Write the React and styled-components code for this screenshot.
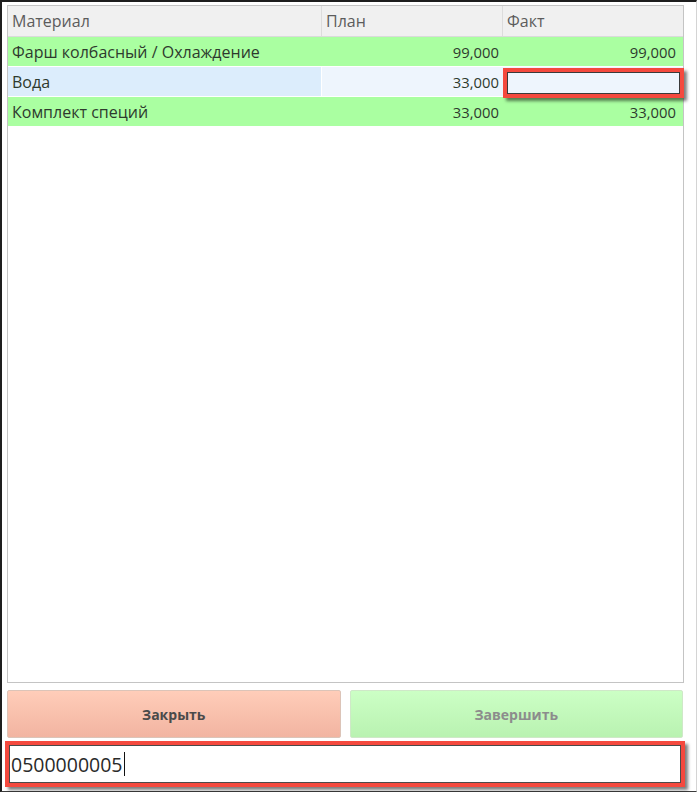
import React from 'react';
import styled, { createGlobalStyle } from 'styled-components';

const Global = createGlobalStyle`
  html, body { margin: 0; padding: 0; background: #fff; }
  body { font-family: "Open Sans", "Noto Sans", sans-serif; }
`;

const Window = styled.div`
  box-sizing: border-box;
  width: 697px;
  height: 792px;
  border-top: 2px solid #1e1e1e;
  border-left: 2px solid #1e1e1e;
  border-right: 1px solid #d4d4d4;
  border-bottom: 1px solid #3c3c3c;
  padding: 3px 12px 0 5px;
  display: flex;
  flex-direction: column;
  background: #fff;
`;

const Table = styled.div`
  box-sizing: border-box;
  height: 678px;
  border: 1px solid #c4c4c4;
  display: flex;
  flex-direction: column;
`;

const COLS = '314px 181px 1fr';

const HeadRow = styled.div`
  display: grid;
  grid-template-columns: ${COLS};
  background: #f0f0f0;
  border-bottom: 1px solid #dadada;
`;

const HeadCell = styled.div`
  height: 30px;
  padding-left: 4px;
  display: flex;
  align-items: center;
  font-size: 16px;
  color: #5c5c5c;
  border-right: ${p => (p.$last ? 'none' : '1px solid #dcdcdc')};
`;

const Row = styled.div`
  display: grid;
  grid-template-columns: ${COLS};
  background: ${p => p.$bg};
  border-bottom: 1px solid #fff;
`;

const Cell = styled.div`
  position: relative;
  height: 29px;
  box-sizing: border-box;
  display: flex;
  align-items: center;
  justify-content: ${p => (p.$num ? 'flex-end' : 'flex-start')};
  padding: ${p => (p.$num ? `0 ${p.$pr || 4}px 0 0` : '0 0 0 4px')};
  font-size: ${p => (p.$num ? '14.8px' : '16px')};
  color: #2e3a2e;
  background: ${p => p.$bg || 'transparent'};
  border-right: ${p => (p.$sep ? '1px solid #fff' : 'none')};
`;

const Editor = styled.div`
  position: absolute;
  left: 4px;
  right: 3px;
  top: 5px;
  bottom: 2px;
  background: #eef5fd;
  border: 1px solid #3a3a3a;
  box-shadow: 0 0 0 4px #f4493e, 3px 3px 3px 4px rgba(0, 0, 0, 0.5);
`;

const Buttons = styled.div`
  display: grid;
  grid-template-columns: 1fr 1fr;
  gap: 9px;
  margin: 7px 1px 0 0;
  height: 48px;
`;

const Button = styled.button`
  box-sizing: border-box;
  height: 48px;
  border: 1px solid ${p => (p.$variant === 'close' ? '#dcc4b8' : '#cfe8c8')};
  border-radius: 2px;
  background: ${p =>
    p.$variant === 'close'
      ? 'linear-gradient(#ffcdb9, #f2b4a1)'
      : 'linear-gradient(#ccffc5, #b9f2b1)'};
  color: ${p => (p.$variant === 'close' ? '#4a4a4a' : '#8c8c8c')};
  font-family: "Open Sans", "Noto Sans", sans-serif;
  font-weight: 700;
  font-size: 14px;
  padding: 0;
`;

const Input = styled.div`
  box-sizing: border-box;
  margin: 7px 3px 0 2px;
  height: 38px;
  border: 1px solid #4a4a4a;
  background: #fff;
  box-shadow: 0 0 0 4px #f4493e, 3px 3px 3px 4px rgba(0, 0, 0, 0.5);
  display: flex;
  align-items: center;
  padding-left: 1px;
  font-size: 19.5px;
  color: #2a2a2a;
`;

const Caret = styled.span`
  display: inline-block;
  width: 1px;
  height: 24px;
  background: #111;
  margin-left: 1px;
`;

const rows = [
  { name: 'Фарш колбасный / Охлаждение', plan: '99,000', fact: '99,000', done: true },
  { name: 'Вода', plan: '33,000', fact: null, done: false },
  { name: 'Комплект специй', plan: '33,000', fact: '33,000', done: true },
];

export default function App() {
  return (
    <>
      <Global />
      <Window>
        <Table>
          <HeadRow>
            <HeadCell>Материал</HeadCell>
            <HeadCell>План</HeadCell>
            <HeadCell $last>Факт</HeadCell>
          </HeadRow>
          {rows.map(r =>
            r.done ? (
              <Row key={r.name} $bg="#aaffa1">
                <Cell>{r.name}</Cell>
                <Cell $num>{r.plan}</Cell>
                <Cell $num $pr={7}>{r.fact}</Cell>
              </Row>
            ) : (
              <Row key={r.name} $bg="#fff">
                <Cell $bg="#dcedfc" $sep>{r.name}</Cell>
                <Cell $num $bg="#eef5fd">{r.plan}</Cell>
                <Cell $bg="#eef5fd">
                  <Editor />
                </Cell>
              </Row>
            )
          )}
        </Table>
        <Buttons>
          <Button $variant="close">Закрыть</Button>
          <Button $variant="done">Завершить</Button>
        </Buttons>
        <Input>
          0500000005
          <Caret />
        </Input>
      </Window>
    </>
  );
}
